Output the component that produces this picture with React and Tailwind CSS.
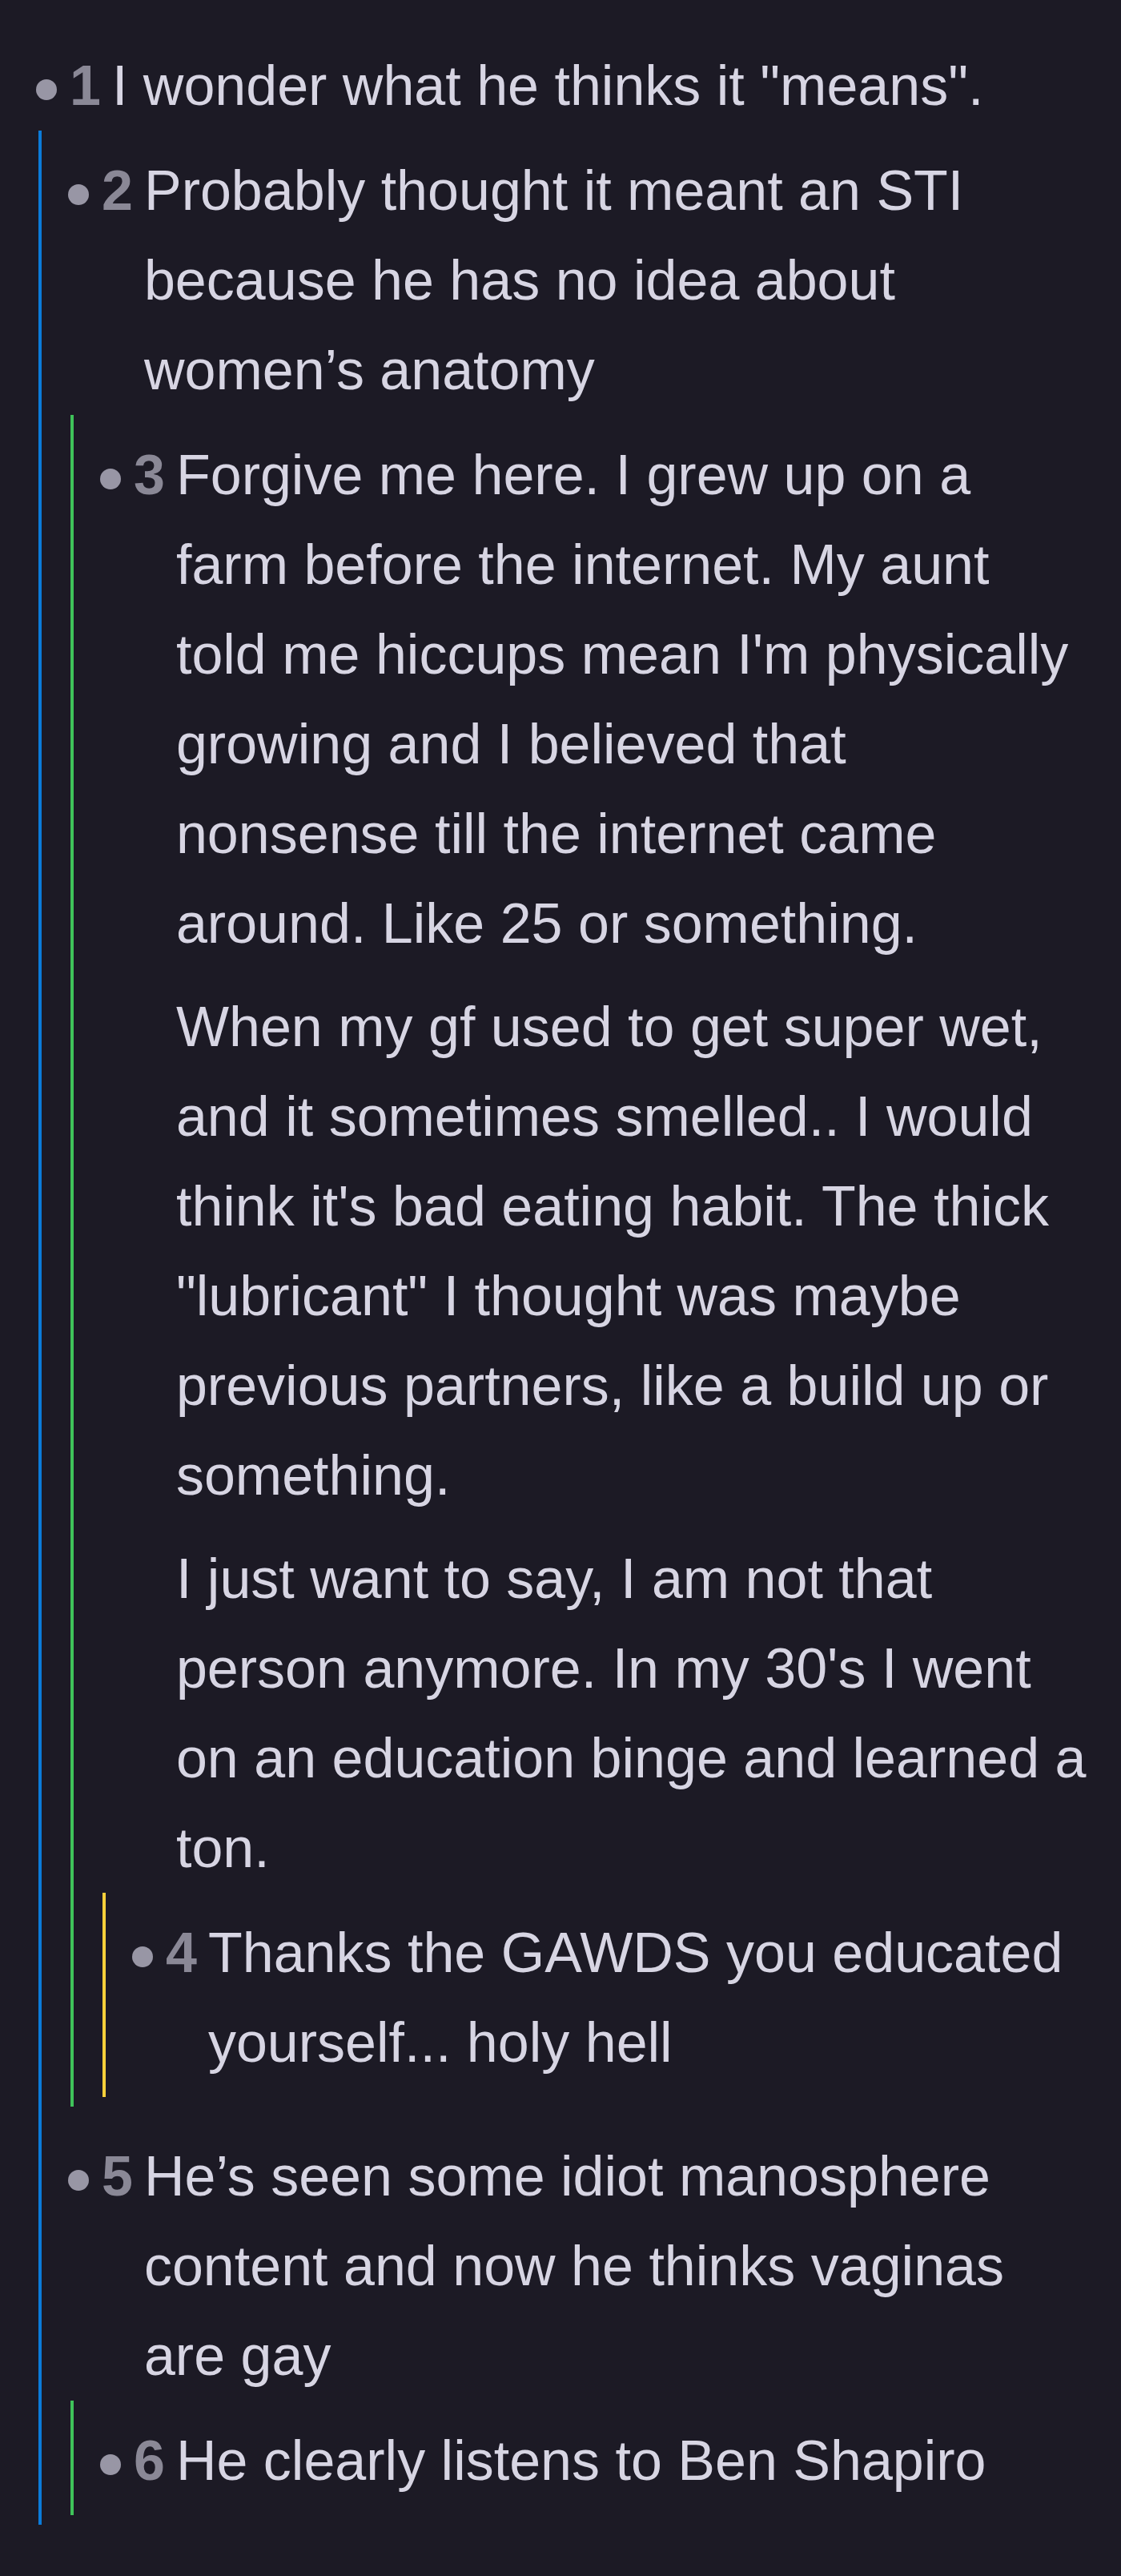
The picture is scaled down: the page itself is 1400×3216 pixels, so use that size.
import React from 'react';

// thread guide colours by nesting depth
const guideColors = ['border-[#0b7bd9]', 'border-[#3fc35a]', 'border-[#f8d03a]'];

const thread = {
  id: 1,
  body: ['I wonder what he thinks it "means".'],
  replies: [
    {
      id: 2,
      body: ['Probably thought it meant an STI because he has no idea about women’s anatomy'],
      replies: [
        {
          id: 3,
          body: [
            "Forgive me here. I grew up on a farm before the internet. My aunt told me hiccups mean I'm physically growing and I believed that nonsense till the internet came around. Like 25 or something.",
            'When my gf used to get super wet, and it sometimes smelled.. I would think it\'s bad eating habit. The thick "lubricant" I thought was maybe previous partners, like a build up or something.',
            "I just want to say, I am not that person anymore. In my 30's I went on an education binge and learned a ton.",
          ],
          replies: [
            {
              id: 4,
              body: ['Thanks the GAWDS you educated yourself... holy hell'],
              replies: [],
            },
          ],
        },
      ],
    },
    {
      id: 5,
      body: ['He’s seen some idiot manosphere content and now he thinks vaginas are gay'],
      replies: [
        {
          id: 6,
          body: ['He clearly listens to Ben Shapiro'],
          replies: [],
        },
      ],
    },
  ],
};

const Comment = ({ comment, depth = 0 }) => {
  return (
    <div className="pb-3">
      <div className="flex items-start">
        <span className="mt-[48px] h-[26px] w-[26px] shrink-0 rounded-full bg-[#9896a5]" />
        <span className="ml-[16px] mr-[14px] shrink-0 font-bold text-[#8a8896]">{comment.id}</span>
        <div className="min-w-0 flex-1 space-y-[17px]">
          {comment.body.map((para, i) => (
            <p key={i}>{para}</p>
          ))}
        </div>
      </div>

      {comment.replies.length > 0 && (
        <div className={`ml-[3px] flex flex-col gap-[19px] border-l-4 pl-[33px] pt-[19px] ${guideColors[depth]}`}>
          {comment.replies.map(reply => (
            <Comment key={reply.id} comment={reply} depth={depth + 1} />
          ))}
        </div>
      )}
    </div>
  );
};

export default function App() {
  return (
    <div
      className="min-h-screen bg-[#1c1a25] pb-[38px] pl-[45px] pr-[33px] pt-[51px] text-[70px] leading-[1.6] text-[#d7d5e3]"
      style={{ fontFamily: '"Liberation Sans", Arial, sans-serif' }}
    >
      <Comment comment={thread} />
    </div>
  );
}
